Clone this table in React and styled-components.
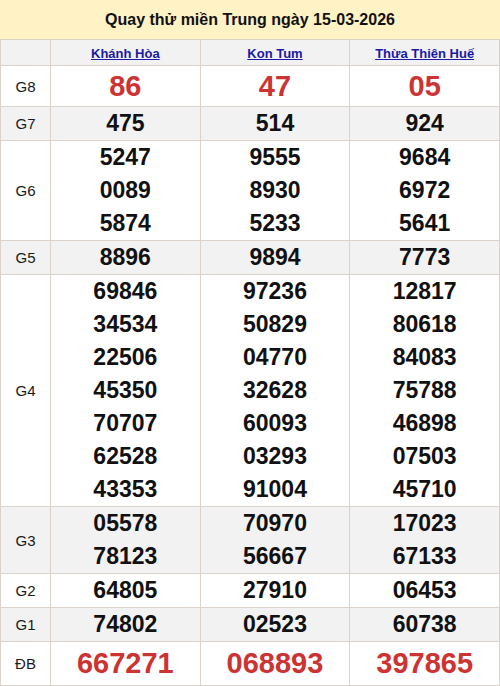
import styled, { createGlobalStyle } from "styled-components";

const GlobalStyle = createGlobalStyle`
  body {
    margin: 0;
    background: #fff;
    font-family: "Liberation Sans", Arial, sans-serif;
  }
`;

const provinces = ["Khánh Hòa", "Kon Tum", "Thừa Thiên Huế"];

const prizes = [
  { label: "G8", big: true, red: true, values: [["86"], ["47"], ["05"]] },
  { label: "G7", values: [["475"], ["514"], ["924"]] },
  {
    label: "G6",
    values: [
      ["5247", "0089", "5874"],
      ["9555", "8930", "5233"],
      ["9684", "6972", "5641"],
    ],
  },
  { label: "G5", values: [["8896"], ["9894"], ["7773"]] },
  {
    label: "G4",
    values: [
      ["69846", "34534", "22506", "45350", "70707", "62528", "43353"],
      ["97236", "50829", "04770", "32628", "60093", "03293", "91004"],
      ["12817", "80618", "84083", "75788", "46898", "07503", "45710"],
    ],
  },
  {
    label: "G3",
    values: [
      ["05578", "78123"],
      ["70970", "56667"],
      ["17023", "67133"],
    ],
  },
  { label: "G2", values: [["64805"], ["27910"], ["06453"]] },
  { label: "G1", values: [["74802"], ["02523"], ["60738"]] },
  {
    label: "ĐB",
    big: true,
    red: true,
    special: true,
    values: [["667271"], ["068893"], ["397865"]],
  },
];

const App = () => {
  return (
    <Wrapper>
      <GlobalStyle />
      <Title>Quay thử miền Trung ngày 15-03-2026</Title>
      <Table>
        <colgroup>
          <col style={{ width: 50 }} />
          <col />
          <col />
          <col />
        </colgroup>
        <thead>
          <Row $shaded>
            <HeadCell />
            {provinces.map((p) => (
              <HeadCell key={p}>
                <ProvinceLink href="#">{p}</ProvinceLink>
              </HeadCell>
            ))}
          </Row>
        </thead>
        <tbody>
          {prizes.map((prize, i) => (
            <Row key={prize.label} $shaded={i % 2 === 1}>
              <LabelCell>{prize.label}</LabelCell>
              {prize.values.map((nums, j) => (
                <NumberCell key={j}>
                  {nums.map((n) => (
                    <Num
                      key={n}
                      $big={prize.big}
                      $red={prize.red}
                      $special={prize.special}
                    >
                      {n}
                    </Num>
                  ))}
                </NumberCell>
              ))}
            </Row>
          ))}
        </tbody>
      </Table>
    </Wrapper>
  );
};

const Wrapper = styled.div`
  width: 500px;
`;

const Title = styled.div`
  height: 39px;
  display: flex;
  align-items: center;
  justify-content: center;
  background: #fff3c5;
  font-size: 16px;
  font-weight: bold;
  color: #111;
`;

const Table = styled.table`
  width: 500px;
  border-collapse: collapse;
  table-layout: fixed;
  font-family: "Liberation Sans", Arial, sans-serif;
`;

const Row = styled.tr`
  background: ${(p) => (p.$shaded ? "#f2f2f2" : "#fff")};
`;

const HeadCell = styled.th`
  border: 1px solid #dbd3ca;
  height: 25px;
  padding: 0;
  text-align: center;
  vertical-align: middle;
`;

const ProvinceLink = styled.a`
  font-size: 13px;
  font-weight: bold;
  color: #1a1aa6;
  text-decoration: underline;
`;

const LabelCell = styled.td`
  border: 1px solid #dbd3ca;
  padding: 0;
  text-align: center;
  font-size: 15px;
  color: #1a1a1a;
`;

const NumberCell = styled.td`
  border: 1px solid #dbd3ca;
  padding: 0;
  text-align: center;
`;

const Num = styled.div`
  font-family: "Liberation Sans", Arial, sans-serif;
  font-weight: bold;
  font-size: ${(p) => (p.$big ? "29px" : "23px")};
  line-height: ${(p) => (p.$big ? (p.$special ? "43px" : "40px") : "33px")};
  color: ${(p) => (p.$red ? "#cc3333" : "#111")};
`;

export default App;
